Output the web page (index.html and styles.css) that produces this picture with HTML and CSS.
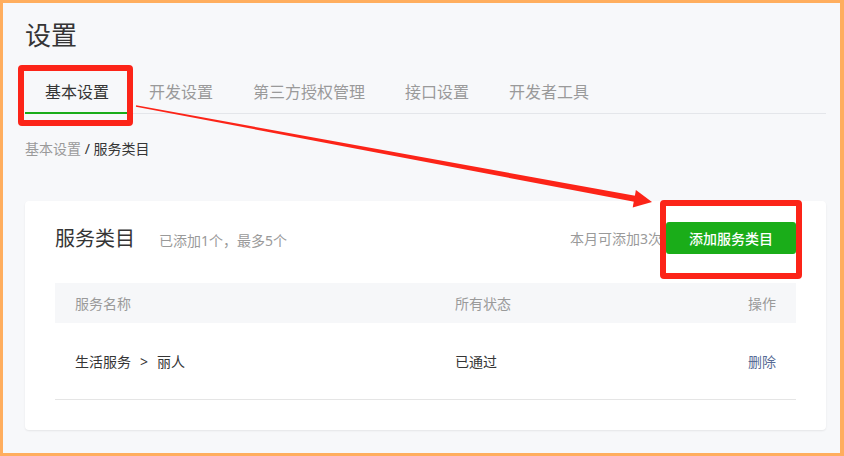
FILE: index.html
```html
<!DOCTYPE html>
<html lang="zh-CN">
<head>
<meta charset="utf-8">
<title>设置</title>
<link rel="stylesheet" href="styles.css">
</head>
<body>
<div class="frame">
  <h1 class="page-title">设置</h1>
  <nav class="tabs">
    <a class="tab active">基本设置</a>
    <a class="tab">开发设置</a>
    <a class="tab">第三方授权管理</a>
    <a class="tab">接口设置</a>
    <a class="tab">开发者工具</a>
  </nav>
  <div class="breadcrumb"><span class="crumb-link">基本设置</span> / 服务类目</div>
  <section class="card">
    <header class="card-head">
      <h2 class="card-title">服务类目</h2>
      <span class="card-sub">已添加1个，最多5个</span>
      <span class="quota">本月可添加3次</span>
      <button class="btn-primary">添加服务类目</button>
    </header>
    <div class="table">
      <div class="thead">
        <div>服务名称</div>
        <div>所有状态</div>
        <div class="col-op">操作</div>
      </div>
      <div class="trow">
        <div>生活服务<span class="sep">&gt;</span>丽人</div>
        <div>已通过</div>
        <div class="col-op"><a class="link">删除</a></div>
      </div>
    </div>
  </section>
</div>
<div class="mark mark-tab"></div>
<div class="mark mark-btn"></div>
<svg class="arrow" width="844" height="456" viewBox="0 0 844 456">
  <polygon points="136.1,105.3 636.5,196 635.5,202 135.9,106.7" fill="#fc2418"/>
  <polygon points="652,202 635.9,189.9 632.7,207.5" fill="#fc2418"/>
</svg>
</body>
</html>
```
FILE: styles.css
```css
* { box-sizing: border-box; }
html, body { margin: 0; padding: 0; }
body {
  position: relative;
  width: 844px;
  height: 456px;
  overflow: hidden;
  font-family: "Noto Sans", "Noto Sans CJK SC", sans-serif;
  color: #353535;
}
.frame {
  width: 844px;
  height: 456px;
  border: 3px solid #ffae5e;
  border-right-width: 4px;
  background: #f7f8fa;
  padding: 14px 14px 0 22px;
}
.page-title {
  margin: 0;
  font-size: 26px;
  line-height: 36px;
  font-weight: normal;
  color: #353535;
}
.tabs {
  display: flex;
  margin-top: 19px;
  border-bottom: 1px solid #e4e6ea;
}
.tab {
  padding: 0 20px;
  font-size: 16px;
  line-height: 40px;
  color: #9a9a9a;
  border-bottom: 2px solid transparent;
  margin-bottom: -1px;
}
.tab.active {
  color: #353535;
  border-bottom-color: #1aad19;
}
.breadcrumb {
  margin-top: 25px;
  font-size: 14px;
  line-height: 20px;
  color: #353535;
}
.crumb-link { color: #9a9a9a; }
.card {
  margin-top: 42px;
  background: #fff;
  border-radius: 4px;
  box-shadow: 0 1px 2px rgba(0, 0, 0, 0.08);
  padding-bottom: 30px;
}
.card-head {
  display: flex;
  align-items: center;
  padding: 21px 30px 29px;
}
.card-title {
  margin: 2px 0 0;
  font-size: 20px;
  line-height: 28px;
  font-weight: normal;
  color: #353535;
}
.card-sub {
  margin: 4px 0 0 24px;
  font-size: 14px;
  color: #9a9a9a;
}
.quota {
  margin-left: auto;
  margin-right: 4px;
  font-size: 14px;
  color: #9a9a9a;
}
.btn-primary {
  height: 32px;
  padding: 0 23px;
  border: 0;
  border-radius: 3px;
  background: #1aad19;
  color: #fff;
  font-family: inherit;
  font-size: 14px;
  font-weight: 500;
}
.table { margin: 0 30px; }
.thead, .trow {
  display: grid;
  grid-template-columns: 380px 1fr auto;
  align-items: center;
  padding: 0 20px;
  font-size: 14px;
}
.thead {
  height: 40px;
  background: #f6f7f9;
  color: #9a9a9a;
}
.trow {
  height: 77px;
  border-bottom: 1px solid #e5e5e5;
  color: #353535;
}
.col-op { text-align: right; }
.sep { margin: 0 9px; }
.link { color: #576b95; }
.mark {
  position: absolute;
  border: 6px solid #fc2418;
  border-radius: 4px;
}
.mark-tab { left: 18px; top: 65px; width: 115px; height: 61px; }
.mark-btn { left: 660px; top: 200px; width: 142px; height: 79px; }
.arrow {
  position: absolute;
  left: 0;
  top: 0;
  pointer-events: none;
}
```
